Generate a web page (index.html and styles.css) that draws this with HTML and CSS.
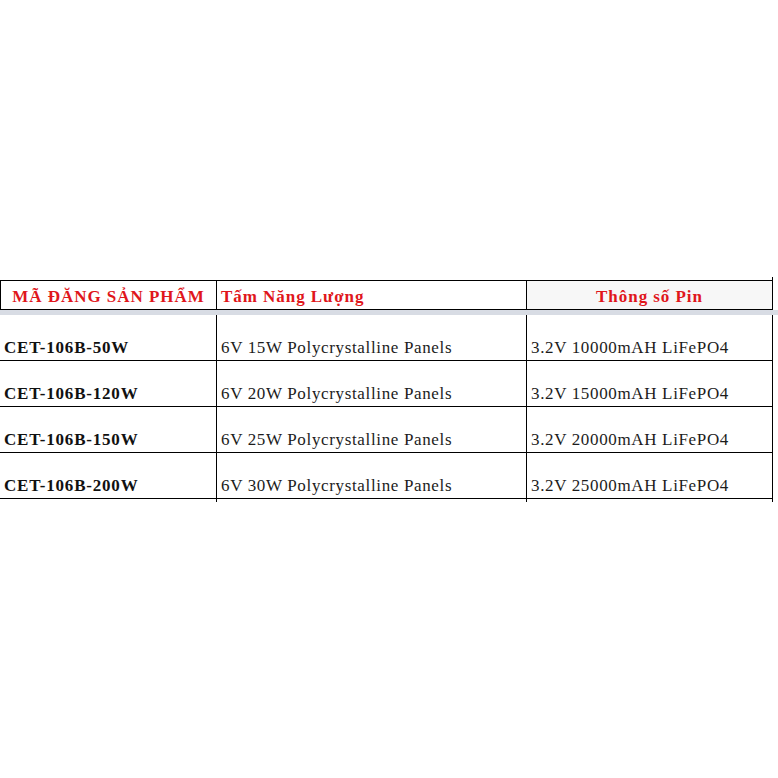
FILE: index.html
```html
<!DOCTYPE html>
<html lang="vi">
<head>
<meta charset="utf-8">
<title>Bảng sản phẩm</title>
<link rel="stylesheet" href="styles.css">
</head>
<body>
<div class="sheet">
  <div class="row cap">
    <div class="c c1 none"></div>
    <div class="c c2 none"></div>
    <div class="c c3"></div>
  </div>
  <div class="row head">
    <div class="c c1 hc center">MÃ ĐĂNG SẢN PHẨM</div>
    <div class="c c2 hc">Tấm Năng Lượng</div>
    <div class="c c3 hc center shade">Thông số Pin</div>
  </div>
  <div class="band"></div>
  <div class="row body">
    <div class="c c1 code">CET-106B-50W</div>
    <div class="c c2">6V 15W Polycrystalline Panels</div>
    <div class="c c3">3.2V 10000mAH LiFePO4</div>
  </div>
  <div class="row body">
    <div class="c c1 code">CET-106B-120W</div>
    <div class="c c2">6V 20W Polycrystalline Panels</div>
    <div class="c c3">3.2V 15000mAH LiFePO4</div>
  </div>
  <div class="row body">
    <div class="c c1 code">CET-106B-150W</div>
    <div class="c c2">6V 25W Polycrystalline Panels</div>
    <div class="c c3">3.2V 20000mAH LiFePO4</div>
  </div>
  <div class="row body">
    <div class="c c1 code">CET-106B-200W</div>
    <div class="c c2">6V 30W Polycrystalline Panels</div>
    <div class="c c3">3.2V 25000mAH LiFePO4</div>
  </div>
  <div class="row tail">
    <div class="c c1"></div>
    <div class="c c2"></div>
    <div class="c c3"></div>
  </div>
</div>
</body>
</html>
```
FILE: styles.css
```css
html, body {
  margin: 0;
  padding: 0;
  background: #ffffff;
}
.sheet {
  padding-top: 277px;
  width: 778px;
  font-family: "Liberation Serif", "Times New Roman", serif;
  font-size: 17px;
  line-height: 18px;
  letter-spacing: 0.65px;
  color: #1c1c1c;
}
.row {
  display: flex;
  width: 773px;
}
.c {
  box-sizing: border-box;
  border-right: 1px solid #000;
  display: flex;
  align-items: flex-end;
  padding-left: 4px;
  white-space: nowrap;
}
.c1 { width: 217px; }
.c2 { width: 310px; }
.c3 { width: 246px; }
.none { border-right: 0; }
.cap { height: 3px; }
.head {
  height: 30px;
  box-sizing: border-box;
  border-top: 1px solid #000;
  border-bottom: 1px solid #000;
}
.head .c1 { border-left: 1px solid #000; }
.hc {
  color: #e0161b;
  font-weight: bold;
  letter-spacing: 0.95px;
  padding-bottom: 3px;
}
.center {
  justify-content: center;
  padding-left: 0;
}
.shade { background: #f7f7f7; }
.band {
  height: 5px;
  width: 778px;
  background: #d8dce4;
}
.body {
  height: 46px;
  box-sizing: border-box;
  border-bottom: 1px solid #000;
}
.body .c { padding-bottom: 3px; }
.code {
  font-weight: bold;
  letter-spacing: 0.8px;
  color: #111;
}
.tail { height: 3px; }
```
